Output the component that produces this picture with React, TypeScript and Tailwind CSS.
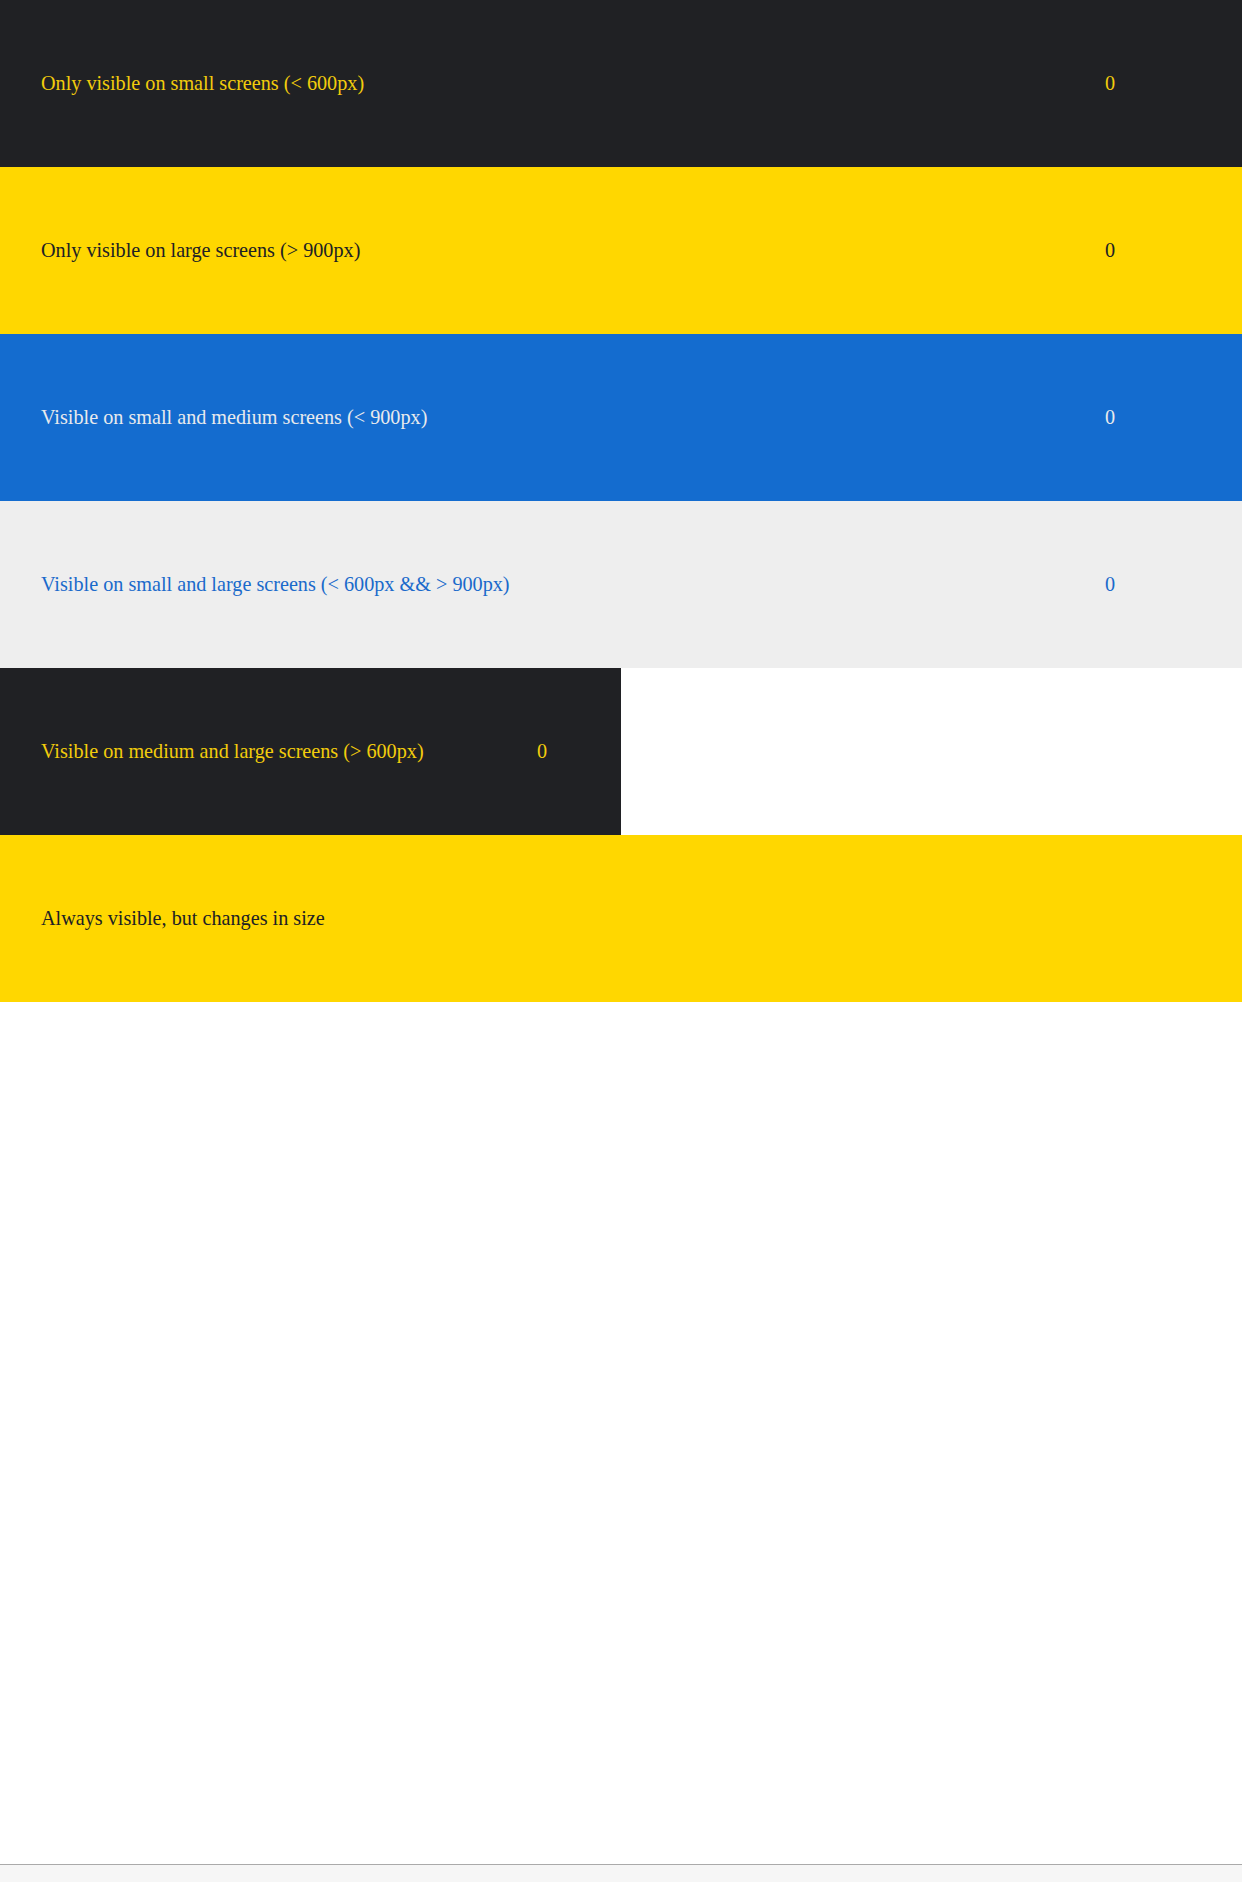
const rows = [
  {
    label: "Only visible on small screens (< 600px)",
    count: 0,
    box: "w-full bg-[#202124] text-[#f2cc0c]",
  },
  {
    label: "Only visible on large screens (> 900px)",
    count: 0,
    box: "w-full bg-[#ffd700] text-[#202124]",
  },
  {
    label: "Visible on small and medium screens (< 900px)",
    count: 0,
    box: "w-full bg-[#146ccf] text-[#e8eaed]",
  },
  {
    label: "Visible on small and large screens (< 600px && > 900px)",
    count: 0,
    box: "w-full bg-[#eeeeee] text-[#1a6acb]",
  },
];

const Row = ({ label, count, box, pr }: { label: string; count?: number; box: string; pr: string }) => (
  <div className={`flex h-[167px] items-center pl-[41px] ${pr} ${box}`}>
    <span className="flex-1">{label}</span>
    {count !== undefined && <span>{count}</span>}
  </div>
);

export default function App() {
  return (
    <div className="flex min-h-[1882px] flex-col bg-white font-['Liberation_Serif',serif] text-[20.2px]">
      {rows.map((r) => (
        <Row key={r.label} label={r.label} count={r.count} box={r.box} pr="pr-[127px]" />
      ))}
      <Row
        label="Visible on medium and large screens (> 600px)"
        count={0}
        box="w-[621px] bg-[#202124] text-[#f2cc0c]"
        pr="pr-[74px]"
      />
      <Row label="Always visible, but changes in size" box="w-full bg-[#ffd700] text-[#202124]" pr="pr-10" />
      <div className="flex-1" />
      <div className="h-[18px] border-t border-[#aaaaaa] bg-[#f6f6f6]" />
    </div>
  );
}
